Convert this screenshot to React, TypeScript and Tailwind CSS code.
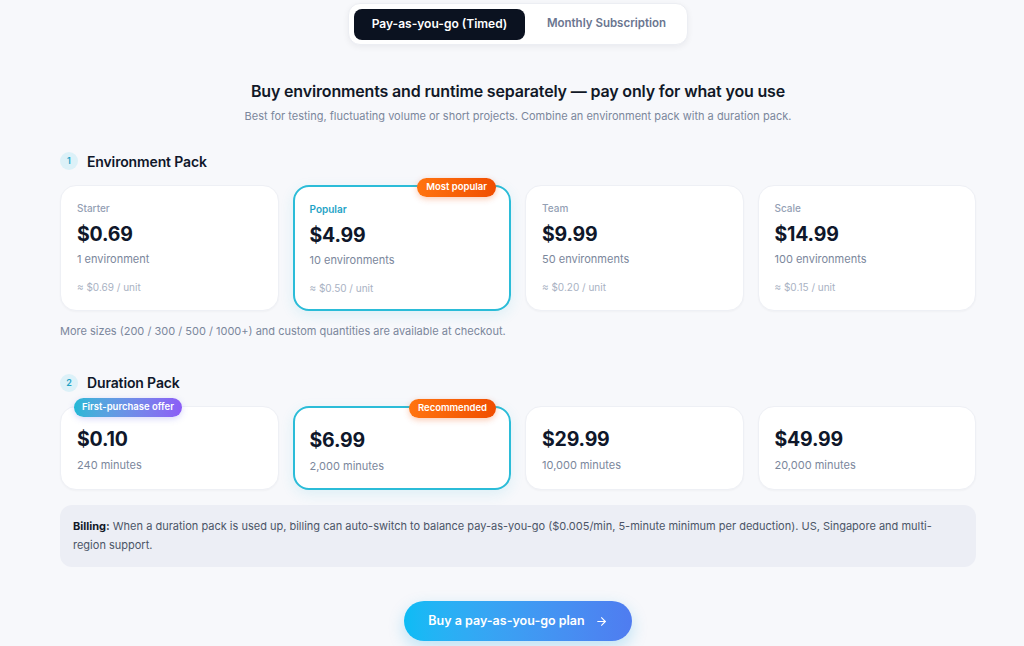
import { ArrowRight } from "lucide-react";

type EnvPack = { label: string; price: string; qty: string; unit: string; featured?: boolean; badge?: string };
type DurPack = { price: string; qty: string; featured?: boolean; badge?: string; offer?: string };

const envPacks: EnvPack[] = [
	{ label: "Starter", price: "$0.69", qty: "1 environment", unit: "≈ $0.69 / unit" },
	{ label: "Popular", price: "$4.99", qty: "10 environments", unit: "≈ $0.50 / unit", featured: true, badge: "Most popular" },
	{ label: "Team", price: "$9.99", qty: "50 environments", unit: "≈ $0.20 / unit" },
	{ label: "Scale", price: "$14.99", qty: "100 environments", unit: "≈ $0.15 / unit" },
];

const durPacks: DurPack[] = [
	{ price: "$0.10", qty: "240 minutes", offer: "First-purchase offer" },
	{ price: "$6.99", qty: "2,000 minutes", featured: true, badge: "Recommended" },
	{ price: "$29.99", qty: "10,000 minutes" },
	{ price: "$49.99", qty: "20,000 minutes" },
];

const cardBase = "relative rounded-2xl bg-white";
const cardPlain = "border border-[#eef0f5] shadow-[0_1px_2px_rgba(15,23,42,0.03)]";
const cardFeatured = "border-2 border-[#2bbcd8] shadow-[0_4px_14px_rgba(34,180,216,0.12)]";

const OrangeBadge = ({ text }: { text: string }) => (
	<span className="absolute -top-[9px] right-[13px] flex h-[19px] items-center rounded-full bg-gradient-to-r from-[#ff7410] to-[#f04d00] px-[9px] text-[9.5px] font-semibold text-white shadow-[0_2px_6px_rgba(240,80,0,0.3)]">
		{text}
	</span>
);

const StepHeader = ({ n, title }: { n: number; title: string }) => (
	<div className="flex items-center gap-[9px]">
		<span className="flex h-[18px] w-[18px] items-center justify-center rounded-full bg-[#dcf1f8] text-[9px] font-semibold text-[#1fa3c6]">
			{n}
		</span>
		<h2 className="text-[14px] font-semibold tracking-[-0.01em] text-[#0f172a]">{title}</h2>
	</div>
);

export default function App() {
	return (
		<div
			className="min-h-[646px] w-full bg-[#f7f8fb] pb-6 pl-[60px] pr-[48px] pt-[3px] text-[#0f172a]"
			style={{ fontFamily: "Inter, 'Noto Sans', sans-serif" }}
		>
			<div className="flex justify-center">
				<div className="flex h-[42px] w-[340px] items-center gap-[6px] rounded-xl border border-[#eceef3] bg-white px-[5px] shadow-[0_2px_6px_rgba(15,23,42,0.06)]">
					<button className="flex h-[31px] w-[171px] items-center justify-center rounded-lg bg-[#0b1220] text-[12px] font-semibold text-white">
						Pay-as-you-go (Timed)
					</button>
					<button className="flex h-[31px] flex-1 items-center justify-center text-[11.5px] font-semibold text-[#6b7690]">
						Monthly Subscription
					</button>
				</div>
			</div>

			<div className="mt-[34px] flex flex-col items-center">
				<h1 className="text-[16px] font-semibold tracking-[-0.01em] text-[#111827]">
					Buy environments and runtime separately — pay only for what you use
				</h1>
				<p className="mt-[5px] text-[11px] text-[#7b879c]">
					Best for testing, fluctuating volume or short projects. Combine an environment pack with a duration pack.
				</p>
			</div>

			<div className="mt-[26px]">
				<StepHeader n={1} title="Environment Pack" />
			</div>

			<div className="mt-[13px] grid grid-cols-4 gap-[14px]">
				{envPacks.map((p) => (
					<div
						key={p.label}
						className={`${cardBase} ${p.featured ? cardFeatured : cardPlain} h-[126px] ${p.featured ? "px-[15px] pt-[15px]" : "px-[16px] pt-[15px]"}`}
					>
						{p.badge && <OrangeBadge text={p.badge} />}
						<div className={`text-[10px] font-medium ${p.featured ? "font-semibold text-[#1fa3c6]" : "text-[#94a0b4]"}`}>
							{p.label}
						</div>
						<div className="mt-[6px] text-[19.5px] font-bold leading-[24px] tracking-[-0.01em] text-[#0f172a]">{p.price}</div>
						<div className="mt-[5px] text-[11px] text-[#7b879c]">{p.qty}</div>
						<div className="mt-[13px] text-[10px] text-[#a9b2c3]">{p.unit}</div>
					</div>
				))}
			</div>

			<p className="mt-[12px] text-[11px] text-[#7b879c]">
				More sizes (200 / 300 / 500 / 1000+) and custom quantities are available at checkout.
			</p>

			<div className="mt-[33px]">
				<StepHeader n={2} title="Duration Pack" />
			</div>

			<div className="mt-[13px] grid grid-cols-4 gap-[14px]">
				{durPacks.map((p) => (
					<div
						key={p.price}
						className={`${cardBase} ${p.featured ? cardFeatured : cardPlain} h-[84px] ${p.featured ? "px-[15px] pt-[20px]" : "px-[16px] pt-[20px]"}`}
					>
						{p.badge && <OrangeBadge text={p.badge} />}
						{p.offer && (
							<span className="absolute -top-[9px] left-[13px] flex h-[19px] items-center rounded-full bg-gradient-to-r from-[#20b8d6] to-[#8b5cf6] px-[8px] text-[9.5px] font-semibold text-white shadow-[0_2px_6px_rgba(99,102,241,0.25)]">
								{p.offer}
							</span>
						)}
						<div className="text-[19.5px] font-bold leading-[24px] tracking-[-0.01em] text-[#0f172a]">{p.price}</div>
						<div className="mt-[6px] text-[11px] text-[#7b879c]">{p.qty}</div>
					</div>
				))}
			</div>

			<div className="mt-[15px] rounded-xl bg-[#eceef5] px-[13px] py-[12px] text-[11px] leading-[19px] text-[#4b5567]">
				<span className="font-bold text-[#111827]">Billing:</span> When a duration pack is used up, billing can
				auto-switch to balance pay-as-you-go ($0.005/min, 5-minute minimum per deduction). US, Singapore and
				multi-region support.
			</div>

			<div className="mt-[34px] flex justify-center">
				<button className="flex h-[40px] w-[228px] items-center justify-center gap-[10px] rounded-full bg-gradient-to-r from-[#0bbcf5] to-[#4f7cf0] text-[12.5px] font-semibold text-white shadow-[0_6px_16px_rgba(14,165,233,0.25)]">
					Buy a pay-as-you-go plan
					<ArrowRight size={13} strokeWidth={2} />
				</button>
			</div>
		</div>
	);
}
